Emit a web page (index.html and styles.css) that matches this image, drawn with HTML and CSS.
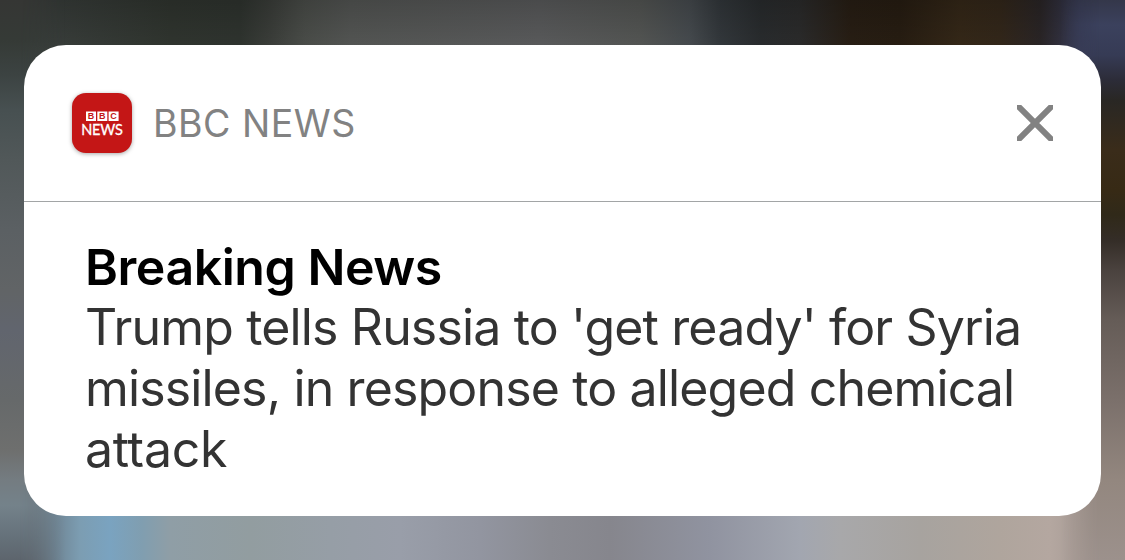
FILE: index.html
```html
<!DOCTYPE html>
<html lang="en">
<head>
  <meta charset="UTF-8" />
  <meta name="viewport" content="width=device-width, initial-scale=1.0"/>
  <title>BBC News</title>
  <link rel="stylesheet" href="styles.css">
</head>
<body>
  <div class="notification">
    <div class="header">
      <svg class="app-icon" viewBox="0 0 60 60">
        <g fill="#fff">
          <rect x="14" y="18.5" width="10" height="9.5" />
          <rect x="25.3" y="18.5" width="10" height="9.5" />
          <rect x="36.6" y="18.5" width="10" height="9.5" />
        </g>
        <g class="logo-letter">
          <text x="19" y="26.4">B</text>
          <text x="30.3" y="26.4">B</text>
          <text x="41.6" y="26.4">C</text>
        </g>
        <text class="logo-news" x="9.3" y="42" textLength="41.5">NEWS</text>
      </svg>
      <span class="app-name">BBC NEWS</span>
      <button class="close" aria-label="Close">
        <svg viewBox="0 0 36 36" width="36" height="36">
          <path d="M-2 -2 L38 38 M38 -2 L-2 38" stroke="#828282" stroke-width="6" />
        </svg>
      </button>
    </div>

    <div class="content">
      <h1 class="title">Breaking News</h1>
      <p class="message">Trump tells Russia to 'get ready' for Syria<br>missiles, in response to alleged chemical<br><span class="last-line">attack</span></p>
    </div>
  </div>
</body>
</html>
```
FILE: styles.css
```css
* {
  box-sizing: border-box;
}

/* blurred wallpaper: left and right edges */
body {
  position: relative;
  z-index: 0;
  margin: 0;
  height: 560px;
  padding: 45px 24px 44px;
  overflow: hidden;
  font-family: Inter, 'Liberation Sans', sans-serif;
  background:
    linear-gradient(#353634 0, #353a36 40px, #3c4342 75px, #475051 110px, #515859 160px, #5b6063 230px, #616466 290px, #61656e 330px, #66696a 400px, #6e6f6e 450px, #747c81 480px, #74828a 505px, #66727b 535px, #5d656d 560px) left / 50% 100% no-repeat,
    linear-gradient(#34374a 0, #3b415d 25px, #363b55 55px, #2c2c38 80px, #292724 100px, #3a2c1a 150px, #372a15 190px, #302919 215px, #342d27 240px, #4a423e 270px, #655c57 320px, #7b706b 400px, #93877f 480px, #9c918c 560px) right / 50% 100% no-repeat;
}

/* top and bottom bands, faded into the edges */
body::before {
  content: "";
  position: absolute;
  inset: 0;
  z-index: -1;
  background:
    linear-gradient(rgba(0, 0, 0, 0.18), rgba(0, 0, 0, 0)) top / 100% 50px no-repeat,
    linear-gradient(90deg, #3a403e 0, #383d3a 60px, #30352f 170px, #2f342f 240px, #3b3e3a 270px, #4b4e4a 305px, #545654 350px, #5a5b5c 540px, #545654 640px, #464b4f 690px, #33383c 720px, #292c2e 760px, #2b2b2b 800px, #281e14 850px, #271d12 900px, #352818 960px, #33271a 1000px, #2a2526 1040px, #383b55 1080px, #3b4059 1125px) top / 100% 75px no-repeat,
    linear-gradient(90deg, #66727b 0, #66727b 30px, #6f8594 55px, #7c9db2 80px, #7aa3c0 110px, #809eb0 142px, #8f9ea6 170px, #929da0 250px, #969ea6 330px, #999ea9 400px, #9295a0 480px, #8a8b92 550px, #86868d 610px, #9093a0 710px, #a2a6b0 800px, #a8a8aa 840px, #a7a39f 920px, #afa59d 1000px, #b4a7a0 1050px, #a39792 1095px, #9e928e 1125px) bottom / 100% 75px no-repeat;
  mask-image: linear-gradient(90deg, transparent 20px, #000 65px, #000 1060px, transparent 1100px);
}

.notification {
  height: 471px;
  background: #fff;
  border-radius: 42px;
}

.header {
  display: flex;
  align-items: center;
  height: 157px;
  padding: 0 48px;
  border-bottom: 1px solid #a2a5a6;
}

.app-icon {
  width: 60px;
  height: 60px;
  background: #c41616;
  border-radius: 14px;
  box-shadow: 0 1px 4px rgba(0, 0, 0, 0.35);
}

.logo-letter {
  fill: #c41616;
  font: 700 9px 'Liberation Sans', sans-serif;
  text-anchor: middle;
}

.logo-news {
  fill: #fff;
  stroke: #fff;
  stroke-width: 0.3;
  font: 400 14.5px Lato, sans-serif;
}

.app-name {
  margin-left: 21px;
  padding-top: 2px;
  font-size: 37.5px;
  line-height: 46px;
  letter-spacing: 0.5px;
  color: #828282;
}

.close {
  display: flex;
  margin-left: auto;
  padding: 0;
  border: none;
  background: none;
}

.content {
  padding: 35px 61px 0;
}

.title {
  margin: 0;
  font-size: 50px;
  font-weight: 600;
  line-height: 60px;
  letter-spacing: -0.45px;
  color: #000;
}

.message {
  margin: 0;
  font-size: 50px;
  line-height: 61px;
  letter-spacing: -0.85px;
  color: #333;
  white-space: nowrap;
}

.last-line {
  letter-spacing: -0.3px;
}
```
